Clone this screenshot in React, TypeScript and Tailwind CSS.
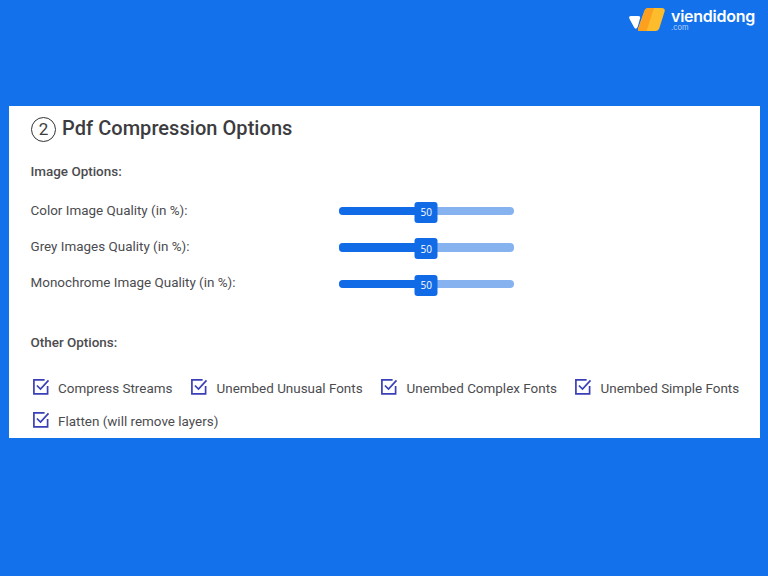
import React, { useState } from "react";

const qualities = [
  { label: "Color Image Quality (in %):", name: "color" },
  { label: "Grey Images Quality (in %):", name: "grey" },
  { label: "Monochrome Image Quality (in %):", name: "monochrome" },
];

const otherOptions = [
  { label: "Compress Streams", width: "w-[158.5px]" },
  { label: "Unembed Unusual Fonts", width: "w-[190px]" },
  { label: "Unembed Complex Fonts", width: "w-[194px]" },
  { label: "Unembed Simple Fonts", width: "w-[166px]" },
  { label: "Flatten (will remove layers)", width: "w-[190px]" },
];

const Logo = () => {
  return (
    <div className="flex h-[37px] pl-[628px]">
      <svg width="38" height="37" viewBox="0 0 38 37" className="shrink-0">
        <path
          d="M3 16H10Q12.8 16 12 18.4L9.8 26.6Q8.4 30.4 6.2 27.4L1.4 18.8Q.4 16 3 16Z"
          fill="#fff"
        />
        <path
          d="M20.5 8H33.5Q37.6 8 36.6 11.6L31.4 28Q30.4 31 27.4 31H11.5Q9.4 31 10 29L16.4 11Q17.4 8 20.5 8Z"
          fill="#fdbc2c"
        />
        <path
          d="M20.5 8H26L18.6 31H11.5Q9.4 31 10 29L16.4 11Q17.4 8 20.5 8Z"
          fill="#fda01f"
        />
      </svg>
      <div className="ml-[5px] pt-[8px] font-['Inter',sans-serif] text-white">
        <div className="text-[16px] leading-[16px] font-semibold tracking-[-0.25px]">
          viendidong
        </div>
        <div className="text-[7.5px] leading-[7px] text-[#b5d2fb]">.com</div>
      </div>
    </div>
  );
};

const CheckIcon = () => {
  return (
    <svg
      width="18"
      height="18"
      viewBox="0 0 18 18"
      fill="none"
      stroke="#3a3fb8"
      strokeWidth="1.7"
      className="shrink-0"
    >
      <path d="M12.6 1.9H1.9V15.8H15.6V8" />
      <path d="M4.9 7.5L8.5 11L16.5 2.4" />
    </svg>
  );
};

const QualitySlider = ({ value }: { value: number }) => {
  return (
    <div className="relative mt-[2px] h-[8.5px] w-[174.5px] rounded-[4px] bg-[#86b2f0]">
      <div
        className="h-full rounded-l-[4px] bg-[#126be6]"
        style={{ width: `${value}%` }}
      />
      <div
        className="absolute -top-[5px] flex h-[21px] w-[23px] -translate-x-1/2 items-center justify-center rounded-[3px] bg-[#126be6] pt-px font-['Open_Sans',sans-serif] text-[10px] text-white"
        style={{ left: `${value}%` }}
      >
        {value}
      </div>
    </div>
  );
};

const App = () => {
  const [values] = useState<Record<string, number>>({
    color: 50,
    grey: 50,
    monochrome: 50,
  });

  return (
    <div className="h-[576px] w-[768px] overflow-hidden bg-[#1371ec] font-['Roboto',sans-serif] text-[#4c4c4f]">
      <Logo />
      <div className="mt-[69px] ml-[9px] h-[332px] w-[751px] bg-white pl-[21.5px]">
        <div className="flex h-[47px] items-center">
          <div className="ml-[0.5px] flex size-[25px] items-center justify-center rounded-full border-[1.5px] border-[#333] text-[17px] text-[#3c3c3c]">
            2
          </div>
          <h1 className="-mt-[3px] ml-[6px] text-[20px] leading-[24px] font-medium tracking-[0.05px] text-[#3c3c40]">
            Pdf Compression Options
          </h1>
        </div>
        <h2 className="mt-[9px] text-[13.45px] leading-[20px] font-medium">
          Image Options:
        </h2>
        <div className="mt-[10px]">
          {qualities.map((quality) => (
            <div key={quality.name} className="flex h-[36.4px] items-center">
              <div className="mt-px w-[308.5px] text-[13.45px]">
                {quality.label}
              </div>
              <QualitySlider value={values[quality.name]} />
            </div>
          ))}
        </div>
        <h2 className="mt-[32px] text-[13.45px] leading-[20px] font-medium">
          Other Options:
        </h2>
        <div className="mt-[18px] flex flex-wrap pl-px">
          {otherOptions.map((option) => (
            <label
              key={option.label}
              className={`flex h-[32.5px] items-center text-[13.45px] whitespace-nowrap ${option.width}`}
            >
              <CheckIcon />
              <span className="mt-[4px] ml-[8.5px]">{option.label}</span>
            </label>
          ))}
        </div>
      </div>
    </div>
  );
};

export default App;
